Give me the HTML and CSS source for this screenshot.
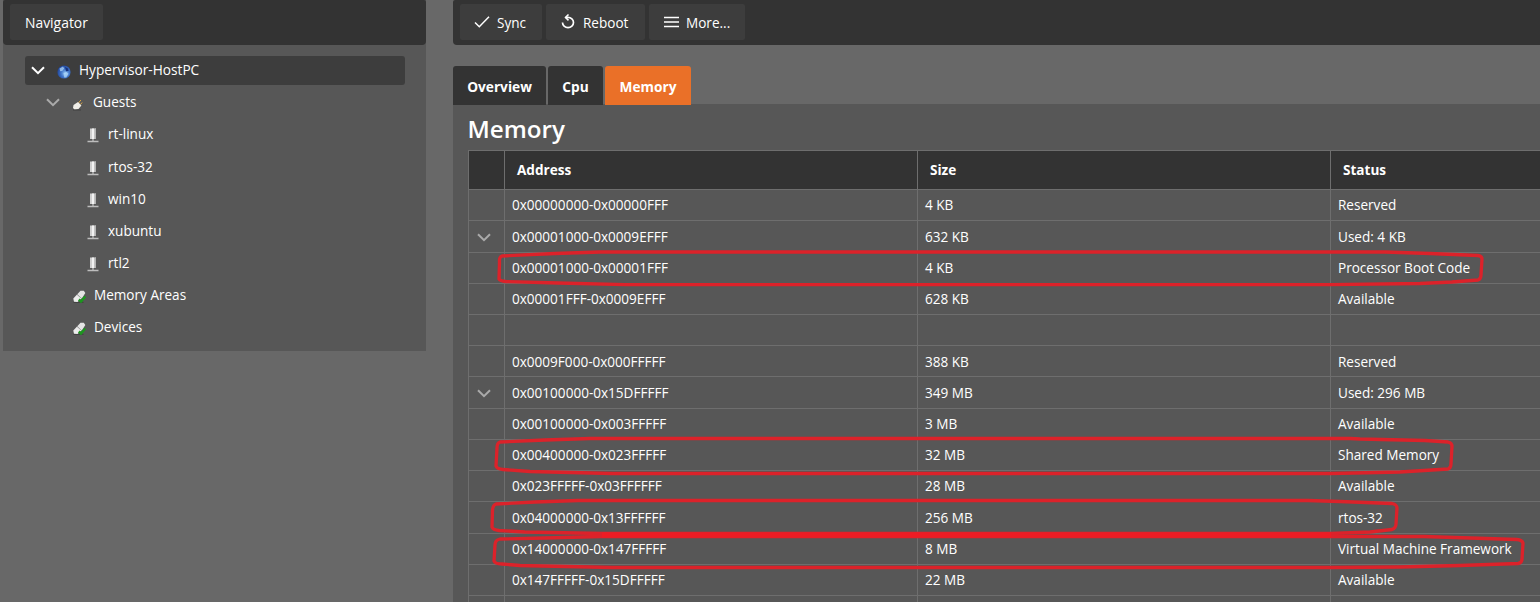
FILE: index.html
```html
<!DOCTYPE html>
<html lang="en">
<head>
<meta charset="utf-8">
<title>Hypervisor-HostPC</title>
<link rel="stylesheet" href="styles.css">
</head>
<body>
<!-- icons -->
<svg class="defs" width="0" height="0">
  <defs>
    <radialGradient id="globe-fill" cx="60%" cy="60%" r="65%">
      <stop offset="0" stop-color="#8fc4f5"/>
      <stop offset="0.5" stop-color="#3f74c8"/>
      <stop offset="1" stop-color="#1d3f93"/>
    </radialGradient>
    <symbol id="chevron" viewBox="0 0 14 9"><path d="M1 1.2l6 6 6-6" fill="none" stroke="currentColor" stroke-width="2"/></symbol>
    <symbol id="globe" viewBox="0 0 14 14">
      <circle cx="7" cy="7" r="6.6" fill="url(#globe-fill)"/>
      <path d="M2.5 3.5L6 1.5l1.2 2-2 2.5-2 .3zM6.5 8l3-1 2 1.8-2.3 3.6-2 .2z" fill="#b4dcfb" opacity="0.7"/>
      <path d="M8 2l3 1.5.6 2.5-2.6.3z" fill="#15307c"/>
    </symbol>
    <symbol id="plug" viewBox="0 0 12 12">
      <path d="M6.500 4l2.400-3M8.500 5.500l1.600-2" stroke="#d9a648" stroke-width="1"/>
      <path d="M1.500 6L6 3l3.400 3.500L6.500 10 2.500 10.500 1 9z" fill="#f0eee8"/>
      <path d="M1 11h8" stroke="#333" stroke-width="1" opacity="0.6"/>
    </symbol>
    <symbol id="server" viewBox="0 0 12 15">
      <path d="M3 0.500h6v10.500H3z" fill="#cfcfcf"/>
      <path d="M5 0.500h2v10.500H5z" fill="#f2f2f2"/>
      <path d="M7.500 .5H9V11H7.500z" fill="#b4b4b4"/>
      <path d="M6 11v2.500M.5 13.500h11" stroke="#bdbdbd" stroke-width="1.300"/>
    </symbol>
    <symbol id="connected" viewBox="0 0 13 13">
      <path d="M0.500 12.300h10" stroke="#333" stroke-width="1.200" opacity="0.6"/>
      <path d="M.3 8.500L4 4.500 8.500 8.500 4.500 12 1 11.800z" fill="#ececec"/>
      <path d="M4.300 4.300L7.500 .8h3.300L12.300 3 9.500 7.500 8.500 8.300z" fill="#e4e4e4"/>
      <path d="M4 4.500l4.500 4" stroke="#aaa" stroke-width="0.700"/>
      <path d="M5.800 9.500l2.200 2L12.300 6.500" fill="none" stroke="#1c961e" stroke-width="2.500"/>
    </symbol>
  </defs>
</svg>

<div class="page">
  <div class="sidebar">
    <div class="bar">
      <a class="btn btn-nav">Navigator</a>
    </div>
    <ul class="tree">
      <li class="selected"><svg class="arrow"><use href="#chevron"/></svg><svg class="ico globe"><use href="#globe"/></svg><span class="t-host">Hypervisor-HostPC</span></li>
      <li class="lvl1"><svg class="arrow"><use href="#chevron"/></svg><svg class="ico plug"><use href="#plug"/></svg><span>Guests</span></li>
      <li class="lvl2"><svg class="ico server"><use href="#server"/></svg><span>rt-linux</span></li>
      <li class="lvl2"><svg class="ico server"><use href="#server"/></svg><span>rtos-32</span></li>
      <li class="lvl2"><svg class="ico server"><use href="#server"/></svg><span>win10</span></li>
      <li class="lvl2"><svg class="ico server"><use href="#server"/></svg><span>xubuntu</span></li>
      <li class="lvl2"><svg class="ico server"><use href="#server"/></svg><span>rtl2</span></li>
      <li class="lvl1b"><svg class="ico conn"><use href="#connected"/></svg><span>Memory Areas</span></li>
      <li class="lvl1b"><svg class="ico conn"><use href="#connected"/></svg><span>Devices</span></li>
    </ul>
  </div>

  <div class="main">
    <div class="bar">
      <a class="btn btn-sync"><svg width="16" height="14" viewBox="0 0 16 14"><path d="M1 7.500l4.300 4.200L15 1.800" fill="none" stroke="#fff" stroke-width="1.500"/></svg>Sync</a>
      <a class="btn btn-reboot"><svg width="14" height="15" viewBox="0 0 14 15"><path d="M1.500 8.500a5.500 5.100 0 1 0 5.500-5.100H4.500" fill="none" stroke="#fff" stroke-width="1.700"/><path d="M7.500 0.500L4.500 3.400l3 3" fill="none" stroke="#fff" stroke-width="1.500"/></svg>Reboot</a>
      <a class="btn btn-more"><svg width="15" height="12" viewBox="0 0 15 12"><path d="M0 1.500h15M0 6h15M0 10.500h15" stroke="#fff" stroke-width="1.700"/></svg>More...</a>
    </div>
    <div class="tabs">
      <a class="tab tab-overview">Overview</a>
      <a class="tab tab-cpu">Cpu</a>
      <a class="tab tab-memory active">Memory</a>
    </div>
    <div class="panel">
      <h1>Memory</h1>
      <table class="grid">
        <colgroup><col class="c-arrow"><col class="c-data"><col class="c-data"><col class="c-data"></colgroup>
        <tr class="head"><th></th><th>Address</th><th>Size</th><th>Status</th></tr>
        <tr><td></td><td>0x00000000-0x00000FFF</td><td>4 KB</td><td>Reserved</td></tr>
        <tr class="tall"><td><svg class="arrow"><use href="#chevron"/></svg></td><td>0x00001000-0x0009EFFF</td><td>632 KB</td><td>Used: 4 KB</td></tr>
        <tr><td></td><td>0x00001000-0x00001FFF</td><td>4 KB</td><td>Processor Boot Code</td></tr>
        <tr><td></td><td>0x00001FFF-0x0009EFFF</td><td>628 KB</td><td>Available</td></tr>
        <tr><td></td><td></td><td></td><td></td></tr>
        <tr class="low"><td></td><td>0x0009F000-0x000FFFFF</td><td>388 KB</td><td>Reserved</td></tr>
        <tr class="tall"><td><svg class="arrow"><use href="#chevron"/></svg></td><td>0x00100000-0x15DFFFFF</td><td>349 MB</td><td>Used: 296 MB</td></tr>
        <tr><td></td><td>0x00100000-0x003FFFFF</td><td>3 MB</td><td>Available</td></tr>
        <tr><td></td><td>0x00400000-0x023FFFFF</td><td>32 MB</td><td>Shared Memory</td></tr>
        <tr><td></td><td>0x023FFFFF-0x03FFFFFF</td><td>28 MB</td><td>Available</td></tr>
        <tr class="tall"><td></td><td>0x04000000-0x13FFFFFF</td><td>256 MB</td><td>rtos-32</td></tr>
        <tr><td></td><td>0x14000000-0x147FFFFF</td><td>8 MB</td><td>Virtual Machine Framework</td></tr>
        <tr><td></td><td>0x147FFFFF-0x15DFFFFF</td><td>22 MB</td><td>Available</td></tr>
        <tr><td></td><td></td><td></td><td></td></tr>
      </table>
    </div>
  </div>
</div>

<!-- hand drawn markers over the table -->
<svg class="marks" width="1540" height="602" viewBox="0 0 1540 602">
  <path d="M502 256Q499 257 499.500 262L499 279Q500 281 506 281.500L558 283 625 284.700H1331L1420 283.500 1452 282 1478 280Q1481 279 1481 275L1482 259Q1482 256 1478 255.500L1430 253.500 1385 252H600L555 253.500z"/>
  <path d="M500 442Q497 443 497 448L496 466Q497 469 503 469.500L530 471.500 612 473.500H1331L1400 472 1448 469Q1451 468 1451 464L1452 446Q1452 443 1448 442L1425 440.500 1360 439 1350 438.500H590L545 440z"/>
  <path d="M496 504Q493 505 492.500 510L492 527Q493 530 499 530.500L525 532 602 533.500H1331L1370 532 1392 529.500Q1396 528 1396 524L1397 508Q1397 504.500 1392 503.500L1340 501.500 1308 500.500H578L535 502z"/>
  <path d="M500 539Q495 540 495 545L494 561Q495 564 502 564L520 565.500 612 567.500H1331L1400 567 1460 565.500 1518 563.500Q1522 563 1522 559L1523 543Q1522 540 1517 539.500L1470 538 1424 536.500H600L545 538z"/>
  <path class="overlap" d="M602 535H1331"/>
</svg>
</body>
</html>
```

FILE: styles.css
```css
*{ padding:0; margin:0; box-sizing:border-box; list-style:none;}
body{
  height:602px;
  overflow:hidden;
  background:#686868;
  color:#fff;
  font:13.57px "Open Sans","Noto Sans",sans-serif;
  position:relative;
}
.defs{ position:absolute;}
.page{ display:flex; align-items:flex-start; padding-left:3px; gap:27px;}
.sidebar{ width:423px; flex:none; height:351px; background:#575757;}
.main{ flex:1; min-width:0;}

.bar{
  display:flex;
  height:45px;
  padding:4px 7px;
  gap:4px;
  background:#333;
  border-radius:2px 2px 4px 4px;
}
.main .bar{ border-radius:2px 0 0 4px;}
.btn{
  display:flex;
  align-items:center;
  height:36px;
  padding-bottom:1px;
  background:#3d3d3d;
  border-radius:2px;
  white-space:nowrap;
  line-height:20px;
  padding-top:3px;
}
.btn svg{ margin-top:-3px;}
.btn-nav{ width:93px; padding-left:15px; font-size:13.9px;}
.btn-sync{ width:82px; padding-left:14px; gap:7px;}
.btn-reboot{ width:99px; padding-left:15px; gap:8px;}
.btn-more{ width:96px; padding-left:15px; gap:7px;}

.tree{ padding:11px 21px 0 22px;}
.tree li{ display:flex; align-items:center; height:29px; margin-bottom:3.18px; border-radius:3px; line-height:20px;}
.tree span{ margin-top:-1px;}
.tree .t-host{ font-size:13.7px;}
.tree .selected{ background:#3d3d3d; padding-left:6px;}
.tree .lvl1{ padding-left:21px;}
.tree .lvl1b{ padding-left:48px;}
.tree .lvl2{ padding-left:63px;}
.arrow{ width:14px; height:9px; color:#aaa; flex:none;}
.selected .arrow{ color:#fff;}
.ico{ flex:none;}
.globe{ width:14px; height:14px; margin:2px 8px 0 12px;}
.plug{ width:12px; height:12px; margin:5px 9px 0 12px;}
.server{ width:12px; height:15px; margin:2px 8px 0 -1px;}
.tree .lvl2 span{ margin-left:1px;}
.conn{ width:13px; height:13px; margin:2px 8px 0 0;}

.tabs{ display:flex; gap:2px; height:39px; margin:21px 0 -1px; position:relative;}
.tab{ height:39px; line-height:42px; text-align:center; font-weight:bold; font-size:13.7px; background:#333; border-radius:3px 3px 0 0;}
.tab-overview{ width:93px;}
.tab-cpu{ width:55px;}
.tab-memory{ width:86px;}
.active{ background:#ea7028;}

.panel{ height:498px; padding-left:15px; background:#575757; overflow:hidden;}
h1{ height:46px; line-height:50px; font-size:24.2px; font-weight:600; text-indent:-0.5px;}
.grid{ table-layout:fixed; width:1276px; border-spacing:0; border-top:1px solid #6e6e6e; border-left:1px solid #6e6e6e;}
.c-arrow{ width:36px;}
.c-data{ width:413px;}
.grid th,.grid td{ border-right:1px solid #6e6e6e; border-bottom:1px solid #6e6e6e; text-align:left; white-space:nowrap; line-height:20px;}
.grid th{ height:39px; padding-left:12px; background:#333;}
.grid td{ height:31px; padding-left:7px;}
.grid .tall td{ height:32px;}
.grid .low td{ padding-top:2px;}
.grid .arrow{ display:block; margin:2px 0 0 1px;}

.marks{ position:absolute; left:0; top:0; pointer-events:none;}
.marks path{ fill:none; stroke:#dc222a; stroke-width:3.3; stroke-linejoin:round;}
.marks .overlap{ stroke:#ed1c24; stroke-width:5;}
```
